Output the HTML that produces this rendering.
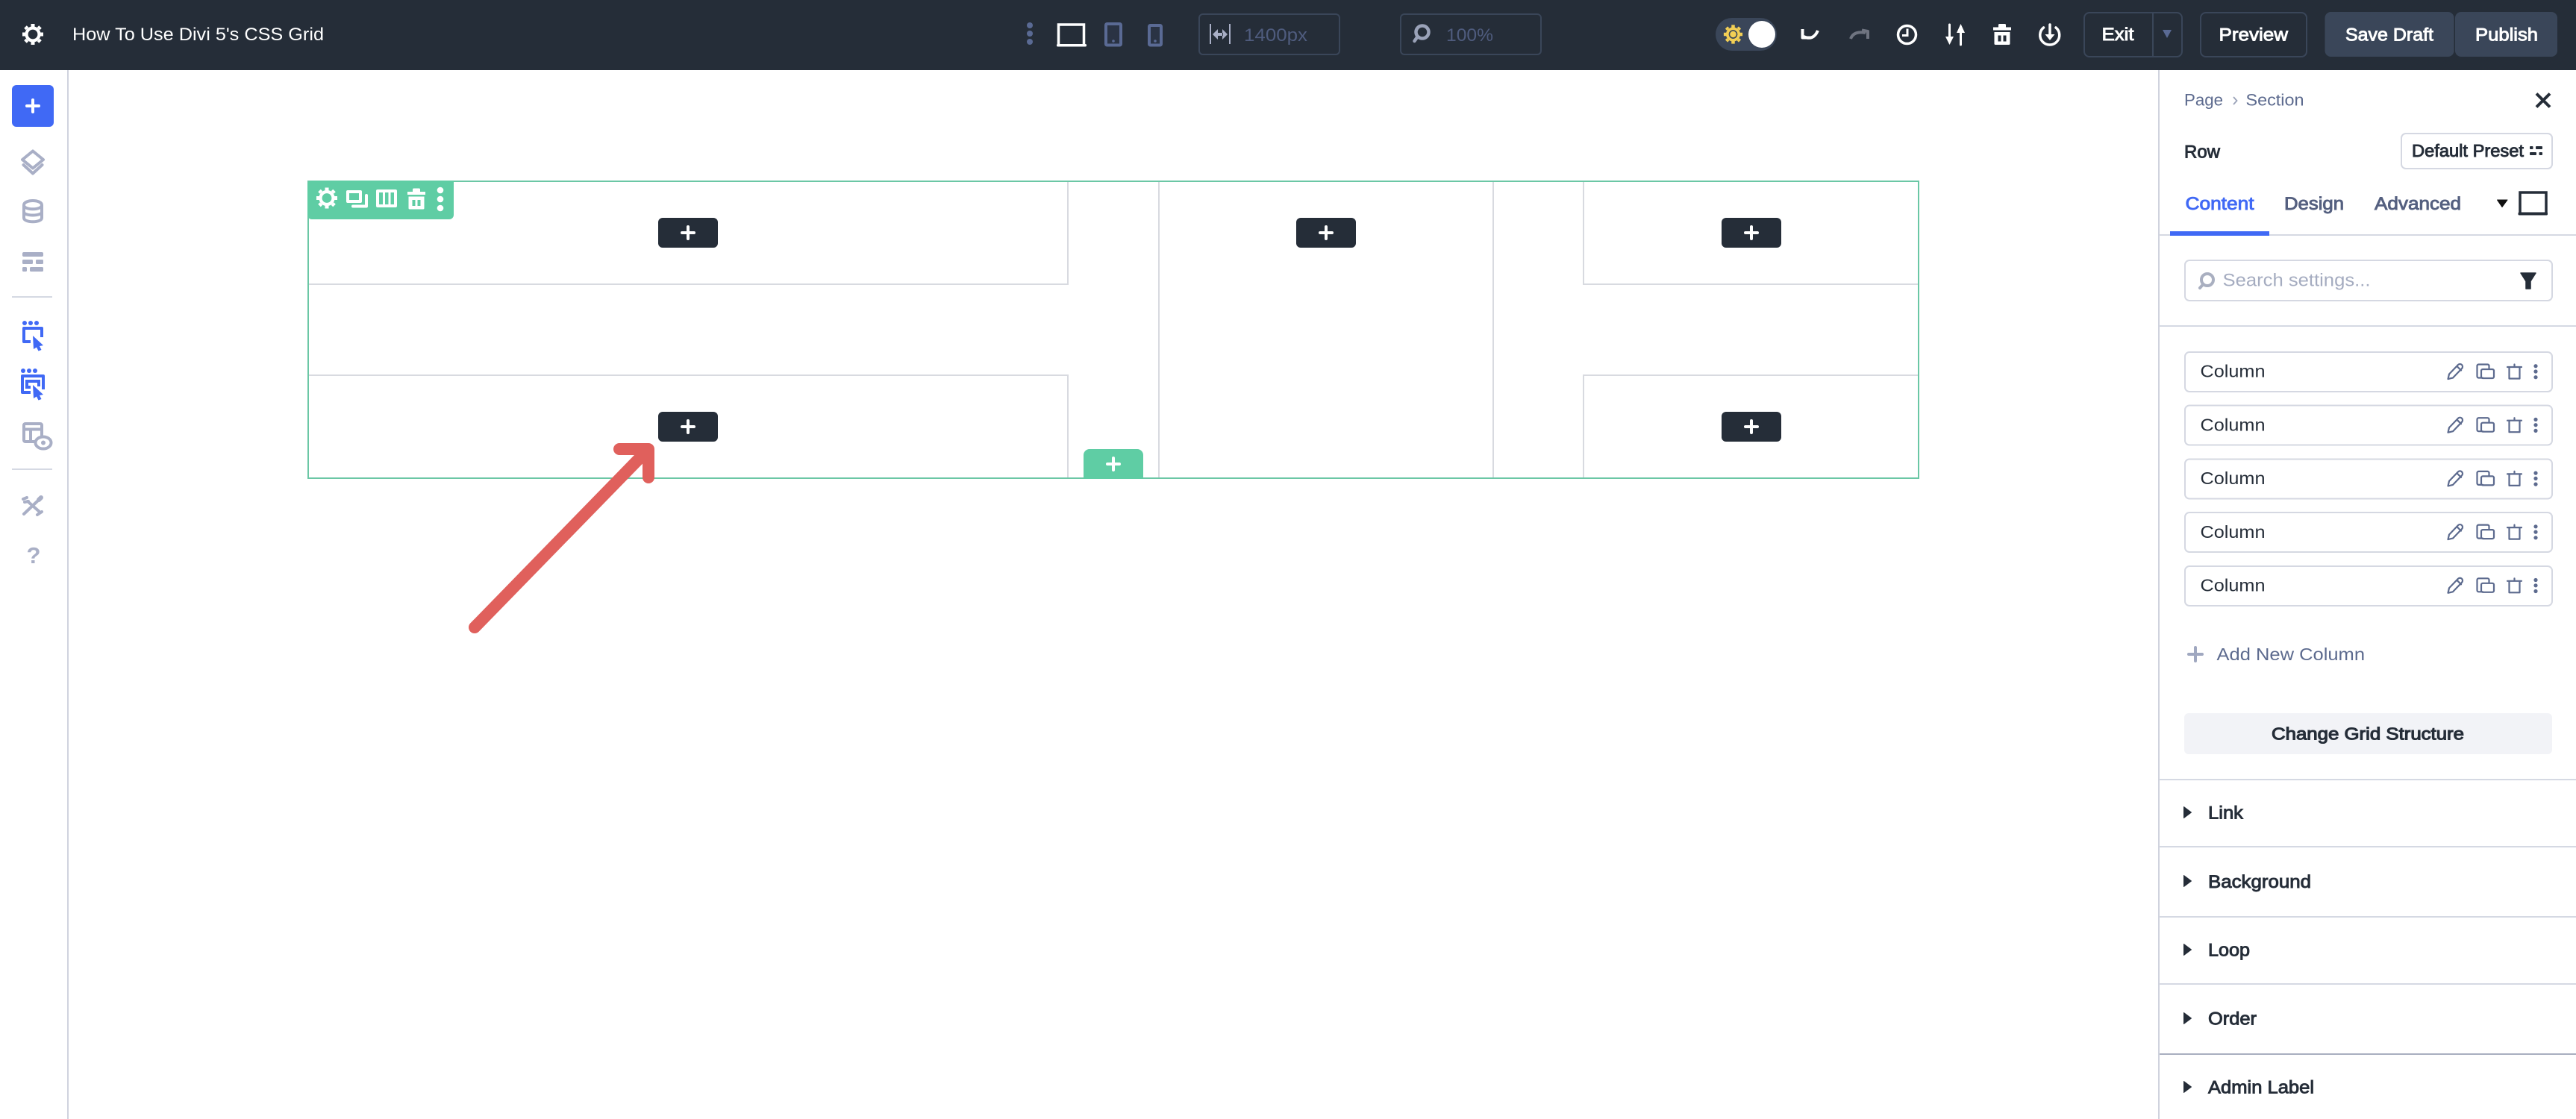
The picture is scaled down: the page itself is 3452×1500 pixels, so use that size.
<!DOCTYPE html>
<html lang="en"><head><meta charset="utf-8"><title>How To Use Divi 5's CSS Grid</title>
<style>
html,body{margin:0;padding:0;background:#fff;width:3452px;height:1500px;overflow:hidden}
svg{display:block}
text{font-family:"Liberation Sans",sans-serif}
.m{stroke-width:.9;paint-order:stroke}
.s{stroke-width:1.1;paint-order:stroke}
</style></head><body>
<svg xmlns="http://www.w3.org/2000/svg" width="3452" height="1500" viewBox="0 0 3452 1500">
<defs>
<g id="gear"><circle r="8.500" fill="none" stroke="currentColor" stroke-width="4.200"/><g stroke="currentColor" stroke-width="5"><path d="M0-14V-10M0 10V14M-14 0H-10M10 0H14M-10-10L-7.500-7.500M7.500 7.500L10 10M-10 10L-7.500 7.500M7.500-7.500L10-10"/></g></g>
<path id="trashS" fill-rule="evenodd" d="M-3.500-14h7a1.500 1.500 0 0 1 1.500 1.500V-9.500H12V-5.500H-12V-9.500H-5V-12.500A1.500 1.500 0 0 1-3.500-14ZM-10.500-3H10.500V12.500A1.500 1.500 0 0 1 9 14H-9A1.500 1.500 0 0 1-10.500 12.500ZM-5.500 1.500V9.500H-1.500V1.500ZM1.500 1.500V9.500H5.500V1.500Z"/>
<g id="rowicons" fill="none" stroke="#5c6a8e" stroke-width="2.200" stroke-linejoin="round" stroke-linecap="round">
<path d="M3280.500 508l1.500-6.500 12-12.500a3 3 0 0 1 5 5l-12 12.500ZM3293 491.500l5 5"/>
<path d="M3327 506.500h-5.500a2 2 0 0 1-2-2v-14a2 2 0 0 1 2-2h12a2 2 0 0 1 2 2v4M3327 495h13a2 2 0 0 1 2 2v8a2 2 0 0 1-2 2h-13a2 2 0 0 1-2-2v-8a2 2 0 0 1 2-2Z"/>
<path d="M3360 492h19M3362.500 492v15.500h14V492M3369.500 492v-3.500"/>
<circle cx="3398" cy="490.700" r="2.600" fill="#5c6a8e" stroke="none"/><circle cx="3398" cy="498" r="2.600" fill="#5c6a8e" stroke="none"/><circle cx="3398" cy="505.700" r="2.600" fill="#5c6a8e" stroke="none"/>
</g>
<path id="plus" d="M-8 0H8M0-8V8" stroke="#fff" stroke-width="4" stroke-linecap="round"/>
<path id="tri" d="M0-7.500L10 0L0 7.500Z" fill="#252d38" stroke="#252d38" stroke-width="1" stroke-linejoin="round"/>
</defs>

<!-- canvas -->
<g fill="none" stroke="#d8dae0" stroke-width="2">
<path d="M414 381H1431V243M414 503H1431V640"/>
<path d="M1553 243V640M2001 243V640"/>
<path d="M2570 381H2122V243M2570 503H2122V640"/>
</g>
<rect x="413" y="243" width="2158" height="398" fill="none" stroke="#6bc7a5" stroke-width="2"/>
<g fill="#252d38">
<rect x="882" y="292" width="80" height="40" rx="6"/><rect x="882" y="552" width="80" height="40" rx="6"/>
<rect x="1737" y="292" width="80" height="40" rx="6"/>
<rect x="2307" y="292" width="80" height="40" rx="6"/><rect x="2307" y="552" width="80" height="40" rx="6"/>
</g>
<use href="#plus" x="922" y="312"/><use href="#plus" x="922" y="572"/><use href="#plus" x="1777" y="312"/><use href="#plus" x="2347" y="312"/><use href="#plus" x="2347" y="572"/>
<path d="M1452 642V610a8 8 0 0 1 8-8h64a8 8 0 0 1 8 8v32Z" fill="#5fcda4"/>
<use href="#plus" x="1492" y="622"/>

<!-- row toolbar -->
<path d="M412 248a6 6 0 0 1 6-6H608V288a6 6 0 0 1-6 6H418a6 6 0 0 1-6-6Z" fill="#5fcda4"/>
<use href="#gear" x="438" y="265.500" color="#fff"/>
<path d="M466 257H483V270H466ZM491 262V276.500H473" fill="none" stroke="#fff" stroke-width="4" stroke-linecap="round" stroke-linejoin="round"/>
<path fill="#fff" fill-rule="evenodd" d="M506 254H530a2 2 0 0 1 2 2V276a2 2 0 0 1-2 2H506a2 2 0 0 1-2-2V256a2 2 0 0 1 2-2ZM508 258V274H513V258ZM516 258V274H520.500V258ZM523.500 258V274H528V258Z"/>
<use href="#trashS" x="558" y="266.500" fill="#fff"/>
<g fill="#fff"><circle cx="590" cy="255" r="4.300"/><circle cx="590" cy="267" r="4.300"/><circle cx="590" cy="279" r="4.300"/></g>

<!-- arrow -->
<path d="M636 841L868 603M830 602H869V640" fill="none" stroke="#e0605c" stroke-width="16" stroke-linecap="round" stroke-linejoin="round"/>

<!-- top bar -->
<rect x="0" y="0" width="3452" height="94" fill="#252d38"/>
<use href="#gear" x="44" y="46" color="#fff"/>
<text x="97" y="54" font-size="24.500" fill="#fff" textLength="337" lengthAdjust="spacingAndGlyphs">How To Use Divi 5's CSS Grid</text>

<g fill="#5a6a94"><circle cx="1380" cy="34" r="4"/><circle cx="1380" cy="45" r="4"/><circle cx="1380" cy="56" r="4"/></g>
<path d="M1418.500 60V33H1452.500V60" fill="none" stroke="#fff" stroke-width="3.500"/><rect x="1416" y="59" width="40" height="3.500" rx="1.500" fill="#fff"/>
<rect x="1482" y="32" width="20" height="28.500" rx="1.500" fill="#2a3344" stroke="#5a6a94" stroke-width="4"/><circle cx="1492" cy="55" r="1.800" fill="#5a6a94"/>
<rect x="1540" y="34" width="16" height="26.500" rx="1.500" fill="#2a3344" stroke="#5a6a94" stroke-width="4"/><circle cx="1548" cy="55" r="1.800" fill="#5a6a94"/>

<rect x="1607" y="19" width="188" height="54" rx="5" fill="none" stroke="#3a4659" stroke-width="2"/>
<rect x="1877" y="19" width="188" height="54" rx="5" fill="none" stroke="#3a4659" stroke-width="2"/>
<path d="M1622 32V59M1648 32V59" stroke="#a9afc6" stroke-width="2"/>
<path d="M1625 46L1632 39V53ZM1645 46L1638 39V53ZM1631 44H1639V48H1631Z" fill="#a9afc6"/>
<text x="1667" y="55" font-size="24" fill="#4f5c7e" textLength="85" lengthAdjust="spacingAndGlyphs">1400px</text>
<circle cx="1906" cy="43" r="8.500" fill="none" stroke="#9aa2b8" stroke-width="4.500"/><path d="M1899 50L1895.500 55" stroke="#9aa2b8" stroke-width="4.500" stroke-linecap="round"/>
<text x="1938" y="55" font-size="24" fill="#4f5c7e" textLength="63" lengthAdjust="spacingAndGlyphs">100%</text>

<rect x="2299" y="24" width="82" height="44" rx="22" fill="#3a4659"/>
<circle cx="2361" cy="46" r="18" fill="#fff"/>
<use href="#gear" x="2322.500" y="46" color="#f2cf55" transform="translate(2322.500 46) scale(.9) translate(-2322.500 -46)"/>
<circle cx="2322.500" cy="46" r="5" fill="#f2cf55" stroke="#3a4659" stroke-width="1.500"/>

<path d="M2415.500 39V50.500H2426M2417 49Q2430 55 2436 41" fill="none" stroke="#fff" stroke-width="4" stroke-linejoin="round"/>
<path d="M2480 52Q2484 41 2500 44M2495 40.500L2503 42V52" fill="none" stroke="#6f7480" stroke-width="4" stroke-linejoin="round"/>
<circle cx="2555.500" cy="46.500" r="12" fill="none" stroke="#fff" stroke-width="3.500"/><path d="M2556 38.500V47.500H2549" fill="none" stroke="#fff" stroke-width="3"/>
<path d="M2612.500 33V54M2627.500 39V60" stroke="#fff" stroke-width="3" stroke-linecap="round"/>
<path d="M2607 49H2618L2612.500 60ZM2622 44H2633L2627.500 32Z" fill="#fff"/>
<use href="#trashS" x="2683" y="46" fill="#fff"/>
<path d="M2738.500 37A13 13 0 1 0 2755 37" fill="none" stroke="#fff" stroke-width="3.500" stroke-linecap="round"/>
<path d="M2747 33V50" stroke="#fff" stroke-width="3.500" stroke-linecap="round"/><path d="M2740.500 46H2753.500L2747 54Z" fill="#fff"/>

<g fill="none" stroke="#3a4659" stroke-width="2">
<rect x="2793" y="17" width="131" height="59" rx="7"/><path d="M2885 17V76"/>
<rect x="2949" y="17" width="142" height="59" rx="7"/>
</g>
<path d="M2898 40H2910L2904 51Z" fill="#5a6a94"/>
<rect x="3115.500" y="16" width="173" height="60" rx="8" fill="#3a4659"/>
<rect x="3290" y="16" width="137" height="60" rx="8" fill="#3a4659"/>
<text class="m" stroke="#fff" x="2816.500" y="54" font-size="24" fill="#fff" textLength="43" lengthAdjust="spacingAndGlyphs">Exit</text>
<text class="m" stroke="#fff" x="2973.500" y="54.500" font-size="24" fill="#fff" textLength="92.500" lengthAdjust="spacingAndGlyphs">Preview</text>
<text class="m" stroke="#fff" x="3143" y="54.500" font-size="24" fill="#fff" textLength="118" lengthAdjust="spacingAndGlyphs">Save Draft</text>
<text class="m" stroke="#fff" x="3317" y="54.500" font-size="24" fill="#fff" textLength="84" lengthAdjust="spacingAndGlyphs">Publish</text>

<!-- left sidebar -->
<rect x="90" y="94" width="2" height="1406" fill="#d0d3de"/>
<rect x="16" y="114" width="56" height="56" rx="6" fill="#4069f5"/>
<use href="#plus" x="44" y="142"/>
<g fill="none" stroke="#a9afc6" stroke-width="4" stroke-linejoin="round" stroke-linecap="round">
<path d="M44 202.500L58 214L44 225.500L30 214Z"/><path d="M31.500 221L44 232.500L56.500 221"/>
<path d="M32 275V292C32 299 56 299 56 292V275C56 267 32 267 32 275C32 282 56 282 56 275M32 284C32 290 56 290 56 284"/>
</g>
<g fill="#a9afc6"><rect x="30" y="338" width="28" height="6" rx="2"/><rect x="30" y="348" width="14" height="6" rx="1.500"/><rect x="48" y="348" width="10" height="6" rx="1.500"/><rect x="30" y="358" width="6" height="6" rx="1.500"/><rect x="40" y="358" width="18" height="6" rx="1.500"/></g>
<rect x="16" y="397" width="54" height="2" fill="#d5d9e3"/>
<g fill="#4069f5"><circle cx="33" cy="433" r="3"/><circle cx="41" cy="433" r="3"/><circle cx="49" cy="433" r="3"/></g>
<path d="M41 458H32V440H56V452" fill="none" stroke="#4069f5" stroke-width="4" stroke-linejoin="round"/>
<path d="M44 450L58 463L53 464L55.500 469L51.500 470.500L49 465.500L45 468Z" fill="#4069f5"/>
<g fill="#4069f5"><circle cx="31" cy="497" r="3"/><circle cx="39" cy="497" r="3"/><circle cx="47" cy="497" r="3"/></g>
<path d="M41 526H30V504H58V522" fill="none" stroke="#4069f5" stroke-width="4" stroke-linejoin="round"/>
<path d="M41 519H36V511H52V518" fill="none" stroke="#4069f5" stroke-width="4"/>
<path d="M44 516L58 529L53 530L55.500 535L51.500 536.500L49 531.500L45 534Z" fill="#4069f5"/>
<g fill="none" stroke="#a9afc6" stroke-width="4" stroke-linejoin="round">
<rect x="32" y="568" width="24" height="24" rx="2"/><path d="M32 575.500H56M41 576V592"/>
</g>
<ellipse cx="58" cy="593.500" rx="10.500" ry="8" fill="#fff" stroke="#a9afc6" stroke-width="4"/><circle cx="58" cy="593.500" r="3" fill="#a9afc6"/>
<rect x="16" y="628" width="54" height="2" fill="#d5d9e3"/>
<g fill="none" stroke="#a9afc6" stroke-linecap="round">
<path d="M32 689L52 670" stroke-width="4"/><path d="M52 670L55 667" stroke-width="6"/>
<path d="M37 672L54 687" stroke-width="4"/>
<path d="M31 669L36 667M38 672L33 673M50 690L56 686" stroke-width="4"/>
</g>
<text x="35.500" y="755" font-size="31" font-weight="700" fill="#a9afc6">?</text>

<!-- right panel -->
<rect x="2892" y="94" width="2" height="1406" fill="#d0d3de"/>
<text x="2927" y="141.500" font-size="22" fill="#5c6a8e" textLength="52" lengthAdjust="spacingAndGlyphs">Page</text>
<path d="M2993 130L2997.500 135L2993 140" fill="none" stroke="#9aa2b8" stroke-width="1.800"/>
<text x="3009.500" y="141.500" font-size="22" fill="#5c6a8e" textLength="78" lengthAdjust="spacingAndGlyphs">Section</text>
<path d="M3399 125.500L3417 143.500M3417 125.500L3399 143.500" stroke="#252d38" stroke-width="4"/>
<text class="m" stroke="#252d38" x="2927" y="211.500" font-size="24" fill="#252d38" textLength="48" lengthAdjust="spacingAndGlyphs">Row</text>
<rect x="3218" y="179" width="202" height="47" rx="6" fill="#fff" stroke="#d5d8e2" stroke-width="2"/>
<text class="m" stroke="#252d38" x="3232" y="210" font-size="23" fill="#252d38" textLength="150" lengthAdjust="spacingAndGlyphs">Default Preset</text>
<g fill="#252d38"><rect x="3390" y="196" width="4.500" height="4" rx="1"/><rect x="3398" y="196" width="9" height="4" rx="1"/><rect x="3390" y="204" width="9" height="4" rx="1"/><rect x="3402.500" y="204" width="4.500" height="4" rx="1"/></g>
<text class="m" stroke="#4069f5" x="2928.500" y="281" font-size="24" fill="#4069f5" textLength="92" lengthAdjust="spacingAndGlyphs">Content</text>
<text class="m" stroke="#556080" x="3061" y="281" font-size="24" fill="#556080" textLength="80" lengthAdjust="spacingAndGlyphs">Design</text>
<text class="m" stroke="#556080" x="3182" y="281" font-size="24" fill="#556080" textLength="116" lengthAdjust="spacingAndGlyphs">Advanced</text>
<path d="M3346.500 268H3360L3353 277.500Z" fill="#111" stroke="#111" stroke-width="1" stroke-linejoin="round"/>
<path d="M3377 286V258H3412V286" fill="none" stroke="#252d38" stroke-width="3.500"/><rect x="3374.500" y="284.500" width="39.500" height="4" rx="1.500" fill="#252d38"/>
<rect x="2894" y="314" width="558" height="2" fill="#d5d9e3"/>
<rect x="2908" y="310" width="133" height="6" fill="#4069f5"/>
<rect x="2928" y="349" width="492" height="54" rx="6" fill="#fff" stroke="#d5d8e2" stroke-width="2"/>
<circle cx="2958" cy="375" r="8" fill="none" stroke="#a9afc0" stroke-width="4"/><path d="M2952 381.500L2948 386" stroke="#a9afc0" stroke-width="4" stroke-linecap="round"/>
<text x="2978.500" y="383.500" font-size="24" fill="#a5acc0" textLength="198" lengthAdjust="spacingAndGlyphs">Search settings...</text>
<path d="M3378 366H3398L3391 377V387H3385V377Z" fill="#252d38" stroke="#252d38" stroke-width="1.500" stroke-linejoin="round"/>
<rect x="2894" y="436" width="558" height="2" fill="#d5d9e3"/>

<g fill="#fff" stroke="#d5d8e2" stroke-width="2">
<rect x="2928" y="472" width="492" height="53" rx="6"/>
<rect x="2928" y="543.500" width="492" height="53" rx="6"/>
<rect x="2928" y="615.500" width="492" height="53" rx="6"/>
<rect x="2928" y="687" width="492" height="53" rx="6"/>
<rect x="2928" y="759" width="492" height="53" rx="6"/>
</g>
<g font-size="23" fill="#252d38">
<text x="2948.500" y="505.500" textLength="87" lengthAdjust="spacingAndGlyphs">Column</text>
<text x="2948.500" y="577.500" textLength="87" lengthAdjust="spacingAndGlyphs">Column</text>
<text x="2948.500" y="649" textLength="87" lengthAdjust="spacingAndGlyphs">Column</text>
<text x="2948.500" y="721" textLength="87" lengthAdjust="spacingAndGlyphs">Column</text>
<text x="2948.500" y="792.500" textLength="87" lengthAdjust="spacingAndGlyphs">Column</text>
</g>
<use href="#rowicons"/><use href="#rowicons" y="71.700"/><use href="#rowicons" y="143.400"/><use href="#rowicons" y="215.100"/><use href="#rowicons" y="286.800"/>

<path d="M2933 877H2951M2942 868V886" stroke="#a0a8c0" stroke-width="4" stroke-linecap="round"/>
<text x="2970.500" y="885" font-size="23.500" fill="#5c6a8e" textLength="198.500" lengthAdjust="spacingAndGlyphs">Add New Column</text>
<rect x="2927" y="956" width="493" height="55" rx="6" fill="#f2f3f7"/>
<text class="s" stroke="#252d38" x="3044" y="991.500" font-size="23" fill="#252d38" textLength="258" lengthAdjust="spacingAndGlyphs">Change Grid Structure</text>

<g fill="#d5d9e3">
<rect x="2894" y="1044" width="558" height="2"/>
<rect x="2894" y="1134" width="558" height="2"/>
<rect x="2894" y="1228" width="558" height="2"/>
<rect x="2894" y="1318" width="558" height="2"/>
</g>
<rect x="2894" y="1412" width="558" height="2" fill="#a9afc0"/>
<use href="#tri" x="2926.500" y="1089"/><use href="#tri" x="2926.500" y="1181"/><use href="#tri" x="2926.500" y="1273"/><use href="#tri" x="2926.500" y="1365"/><use href="#tri" x="2926.500" y="1457"/>
<g font-size="24" fill="#252d38" stroke="#252d38" class="m">
<text x="2959" y="1097.500" textLength="47" lengthAdjust="spacingAndGlyphs">Link</text>
<text x="2959" y="1190" textLength="138" lengthAdjust="spacingAndGlyphs">Background</text>
<text x="2959" y="1281.500" textLength="56" lengthAdjust="spacingAndGlyphs">Loop</text>
<text x="2959" y="1373.500" textLength="65" lengthAdjust="spacingAndGlyphs">Order</text>
<text x="2959" y="1465.500" textLength="142" lengthAdjust="spacingAndGlyphs">Admin Label</text>
</g>
</svg>
</body></html>
